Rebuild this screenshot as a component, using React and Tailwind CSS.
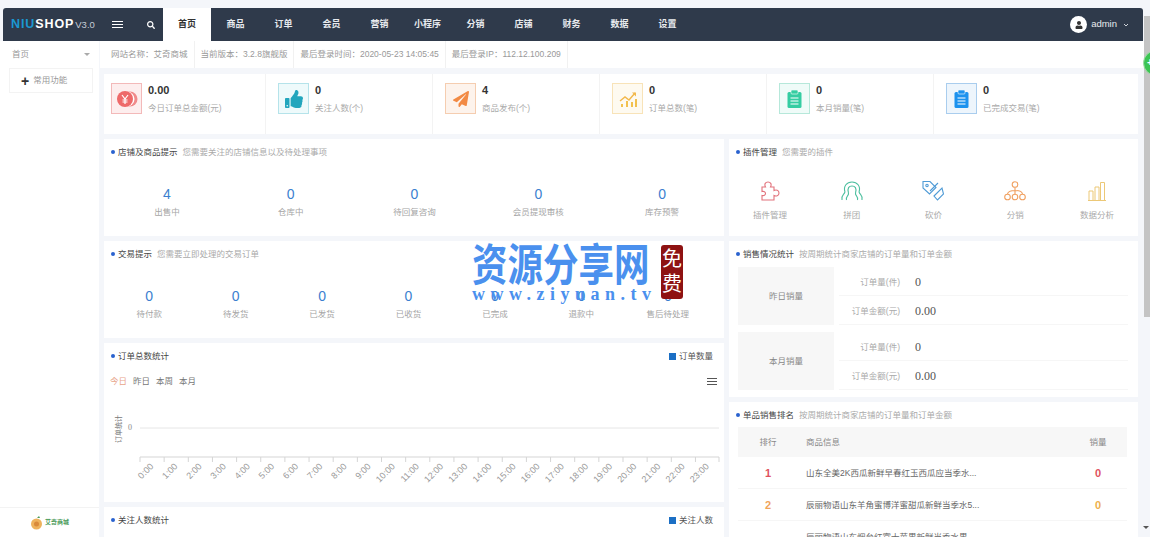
import { FaThumbsUp, FaPaperPlane, FaSearch, FaUser } from 'react-icons/fa';

const navItems = ['商品', '订单', '会员', '营销', '小程序', '分销', '店铺', '财务', '数据', '设置'];
const infoItems = ['网站名称：艾奇商城', '当前版本：3.2.8旗舰版', '最后登录时间：2020-05-23 14:05:45', '最后登录IP：112.12.100.209'];
const storeStats = [['4', '出售中'], ['0', '仓库中'], ['0', '待回复咨询'], ['0', '会员提现审核'], ['0', '库存预警']];
const tradeStats = [['0', '待付款'], ['0', '待发货'], ['0', '已发货'], ['0', '已收货'], ['0', '已完成'], ['0', '退款中'], ['0', '售后待处理']];

function CoinIcon() {
  return (
    <svg width="22" height="18" viewBox="0 0 22 18">
      <circle cx="14" cy="9" r="7.5" fill="#f08a8a" />
      <circle cx="11" cy="9" r="7.5" fill="#fff" />
      <circle cx="9" cy="9" r="8" fill="#ee6a6a" />
      <path d="M6 5l3 4 3-4M9 9v5M6.5 10h5M6.5 12h5" stroke="#fff" strokeWidth="1.2" fill="none" />
    </svg>
  );
}

function GrowthIcon() {
  return (
    <svg width="20" height="18" viewBox="0 0 20 18" fill="none">
      <path d="M2 11l5-4 4 3 6-7" stroke="#f2b84b" strokeWidth="1.4" />
      <path d="M14 2.5h4v4z" fill="#f2b84b" />
      <path d="M3 17v-3h2v3zM8 17v-6h2v6zM13 17v-5h2v5zM17 17v-8h2v8z" fill="#f2c14e" />
    </svg>
  );
}

function ClipboardIcon({ color }) {
  return (
    <svg width="15" height="18" viewBox="0 0 15 18">
      <rect x="0.5" y="2" width="14" height="16" rx="1.5" fill={color} />
      <rect x="4" y="0" width="7" height="4" rx="1" fill={color} stroke="#fff" strokeWidth="0.6" />
      <path d="M3.5 8h8M3.5 11h8M3.5 14h8" stroke="#fff" strokeWidth="1.1" />
    </svg>
  );
}

const statCards = [
  { value: '0.00', label: '今日订单总金额(元)', box: 'border-[#f3b9b9] bg-[#fdeeee]', icon: <CoinIcon /> },
  { value: '0', label: '关注人数(个)', box: 'border-[#b5e3ea] bg-[#eefafb]', icon: <FaThumbsUp className="text-[18px] text-[#23a6bd]" /> },
  { value: '4', label: '商品发布(个)', box: 'border-[#f5cdb0] bg-[#fdf3ec]', icon: <FaPaperPlane className="text-[16px] text-[#f28a44]" /> },
  { value: '0', label: '订单总数(笔)', box: 'border-[#f8e3b8] bg-[#fefaf0]', icon: <GrowthIcon /> },
  { value: '0', label: '本月销量(笔)', box: 'border-[#b6e8da] bg-[#effbf8]', icon: <ClipboardIcon color="#35cda2" /> },
  { value: '0', label: '已完成交易(笔)', box: 'border-[#a9cdee] bg-[#edf5fc]', icon: <ClipboardIcon color="#1c92ee" /> },
];

const plugins = [
  {
    label: '插件管理',
    icon: (
      <svg width="20" height="20" viewBox="0 0 20 20" fill="none" stroke="#e2737c" strokeWidth="1.1">
        <path d="M2 6h3.500C4 3 5.500 1 8 1s4 2 2.500 5H14v3.500c2-1 5-.5 5 2.500s-3 3.500-5 2.500V19H2v-4.500c2 .5 3.500-.5 3.500-2S4 10 2 10.500z" />
      </svg>
    ),
  },
  {
    label: '拼团',
    icon: (
      <svg width="24" height="20" viewBox="0 0 24 20" fill="none" stroke="#4dbf9f" strokeWidth="1.1">
        <path d="M5 11C3 5 7 1 12 1s9 4 7 10M8.500 12C7 7 9 5 12 5s5 2 3.500 7" />
        <path d="M5 11c-1 3-4 3-3 8M8.500 12c.500 3-3 3-2 7M15.500 12c-.500 3 3 3 2 7M19 11c1 3 4 3 3 8" />
      </svg>
    ),
  },
  {
    label: '砍价',
    icon: (
      <svg width="22" height="22" viewBox="0 0 22 22" fill="none" stroke="#4f9bd6" strokeWidth="1.1">
        <path d="M1 1.500h7l6 6-6.500 6.500-6.500-6z" />
        <circle cx="5" cy="5.500" r="1.200" />
        <path d="M12 16l8-8 1.500 6-6 6zM16 3l-8 8" />
      </svg>
    ),
  },
  {
    label: '分销',
    icon: (
      <svg width="22" height="20" viewBox="0 0 22 20" fill="none" stroke="#f0a060" strokeWidth="1.1">
        <circle cx="11" cy="3.500" r="2.800" />
        <circle cx="3.500" cy="16" r="2.800" />
        <circle cx="11" cy="16" r="2.800" />
        <circle cx="18.500" cy="16" r="2.800" />
        <path d="M11 6.500v6.500M11 9.500c-5 0-7 1-7.500 3.500M11 9.500c5 0 7 1 7.500 3.500" />
      </svg>
    ),
  },
  {
    label: '数据分析',
    icon: (
      <svg width="18" height="19" viewBox="0 0 18 19" fill="none" stroke="#ecc877" strokeWidth="1">
        <path d="M0 18.500h18M1 18V9h4v9M7 18V5h4v13M12.500 18V.500h4V18" />
      </svg>
    ),
  },
];

const ranking = [
  ['1', '山东全美2K西瓜新鲜早春红玉西瓜应当季水...', '0', 'text-[#e0525e]', 'text-[#e0525e]'],
  ['2', '辰丽物语山东羊角蜜博洋蜜甜瓜新鲜当季水5...', '0', 'text-[#f0a45a]', 'text-[#eeb04d]'],
  ['', '辰丽物语山东烟台红富士苹果新鲜当季水果...', '', '', ''],
];

function CardTitle({ title, sub }) {
  return (
    <div className="flex h-[26px] items-center pl-[7px]">
      <span className="h-[4px] w-[4px] rounded-full bg-[#2a62cf]" />
      <span className="ml-[3px] text-[8.5px] text-[#444]">{title}</span>
      {sub && <span className="ml-[5px] text-[8.5px] text-[#aaa]">{sub}</span>}
    </div>
  );
}

function StatCell({ value, label }) {
  return (
    <div className="flex flex-col items-center">
      <div className="text-[14px] leading-[20px] text-[#3c7fd0]">{value}</div>
      <div className="mt-[2px] text-[8.5px] leading-[12px] text-[#a5a5a5]">{label}</div>
    </div>
  );
}

function Legend({ label }) {
  return (
    <div className="ml-auto mr-[11px] flex items-center">
      <span className="h-[7px] w-[7px] bg-[#1c6fc4]" />
      <span className="ml-[3px] text-[8.5px] text-[#555]">{label}</span>
    </div>
  );
}

function OrderChart() {
  const hours = Array.from({ length: 24 }, (_, i) => i);
  return (
    <svg width="620" height="100" viewBox="0 0 620 100" className="block">
      <text transform="translate(17 43) rotate(-90)" fontSize="7" fill="#777">订单统计</text>
      <text x="24" y="30" fontSize="8" fill="#888" fontFamily="Liberation Serif">0</text>
      <line x1="36" x2="615" y1="28" y2="28" stroke="#e6e6e6" />
      <line x1="36" x2="615" y1="57" y2="57" stroke="#d5d5d5" />
      {hours.map((h) => {
        const x = 36 + h * 24.15;
        return (
          <g key={h}>
            <line x1={x} x2={x} y1="57" y2="62" stroke="#d5d5d5" />
            <text x={x + 14} y="67" fontSize="9" fill="#999" textAnchor="end" transform={`rotate(-45 ${x + 14} 67)`}>
              {h}:00
            </text>
          </g>
        );
      })}
      <line x1="615" x2="615" y1="57" y2="62" stroke="#d5d5d5" />
    </svg>
  );
}

function SalesBlock({ title, rows }) {
  return (
    <div className="flex">
      <div className="flex w-[96px] items-center justify-center bg-[#f7f7f7] text-[8.5px] text-[#888]">{title}</div>
      <div className="flex-1 pl-[5px]">
        {rows.map(([label, value]) => (
          <div key={label} className="flex h-[29px] items-center border-b border-[#f6f6f6] pt-[2px]">
            <span className="w-[61px] text-right text-[8.5px] text-[#aaa]">{label}</span>
            <span className="ml-[15px] font-['Liberation_Serif',serif] text-[12px] text-[#555]">{value}</span>
          </div>
        ))}
      </div>
    </div>
  );
}

export default function App() {
  return (
    <div className="relative flex h-[537px] w-[1150px] flex-col overflow-hidden bg-[#f4f6fa] pt-[8px] font-['Liberation_Sans','Noto_Sans_CJK_SC',sans-serif]">
      {/* top nav */}
      <div className="ml-[3px] mr-[7px] flex h-[33px] shrink-0 items-center rounded-t-[3px] bg-[#2f3a4b]">
        <div className="flex w-[98px] items-baseline pl-[8px]">
          <span className="text-[12.5px] font-bold tracking-[0.9px] text-[#1b97d2]">NIU</span>
          <span className="text-[12.5px] font-bold tracking-[0.9px] text-white">SHOP</span>
          <span className="ml-[1px] text-[9.5px] text-[#c6ccd6]">V3.0</span>
        </div>
        <div className="ml-[11px] flex w-[11px] flex-col gap-[2px]">
          <span className="h-[1px] bg-white" />
          <span className="h-[1px] bg-white" />
          <span className="h-[1px] bg-white" />
        </div>
        <FaSearch className="ml-[24px] text-[8px] text-white" />
        <div className="ml-[8px] flex h-full w-[48px] items-center justify-center bg-white text-[9px] font-bold text-[#333]">首页</div>
        {navItems.map((item) => (
          <div key={item} className="flex w-[48px] justify-center pl-[1px] text-[9px] font-bold text-[#e8eaee]">{item}</div>
        ))}
        <div className="ml-auto mr-[14px] flex items-center">
          <span className="flex h-[17px] w-[17px] items-center justify-center rounded-full bg-white">
            <FaUser className="text-[8px] text-[#333]" />
          </span>
          <span className="ml-[4px] text-[9.5px] text-[#e8eaee]">admin</span>
          <svg width="6" height="4" viewBox="0 0 6 4" className="ml-[6px]" fill="none" stroke="#cfd3da">
            <path d="M1 1l2 2 2-2" />
          </svg>
        </div>
      </div>

      <div className="flex min-h-0 flex-1">
        {/* sidebar */}
        <aside className="flex w-[99px] shrink-0 flex-col bg-white">
          <div className="flex h-[27px] items-center justify-between pl-[12px] pr-[9px] text-[8.5px] text-[#999]">
            首页
            <span className="h-0 w-0 border-x-[3px] border-t-[3px] border-x-transparent border-t-[#aaa]" />
          </div>
          <div className="ml-[9px] flex h-[25px] w-[84px] items-center border border-[#f3f3f3] pl-[11px] text-[8.5px] text-[#999]">
            <span className="mr-[4px] text-[14px] font-bold leading-none text-[#333]">+</span>
            常用功能
          </div>
          <div className="mt-auto flex h-[30px] items-center justify-center border-t border-[#f3f3f3]">
            <svg width="13" height="14" viewBox="0 0 13 14">
              <circle cx="6.5" cy="8" r="5.5" fill="#eeb25c" />
              <circle cx="6.5" cy="8" r="2.5" fill="#d98a3a" />
              <path d="M7 2l2-2 1 2z" fill="#4a9a58" />
            </svg>
            <span className="ml-[2px] text-[6px] font-bold text-[#4a9a58]">艾奇商城</span>
          </div>
        </aside>

        <main className="ml-[1px] min-w-0 flex-1">
          {/* info bar */}
          <div className="flex h-[27px] items-center bg-white pr-[7px] text-[8.5px] text-[#999]">
            {infoItems.map((item) => (
              <div key={item} className="flex h-full items-center border-r border-[#f1f1f1] px-[6px] first:pl-[11px]">{item}</div>
            ))}
          </div>

          <div className="ml-[4px] mr-[12px] mt-[6px] flex h-[60px] bg-white">
            {statCards.map((card, i) => (
              <div key={card.label} className={i === 0 ? 'flex w-[161px] items-start pl-[7px] pt-[9px]' : 'flex w-[167px] items-start border-l border-[#f3f3f3] pl-[12px] pt-[9px]'}>
                <div className={`flex h-[31px] w-[31px] shrink-0 items-center justify-center border ${card.box}`}>{card.icon}</div>
                <div className="ml-[6px]">
                  <div className="text-[11px] font-bold leading-[14px] text-[#333]">{card.value}</div>
                  <div className="mt-[5px] text-[8.5px] leading-[12px] text-[#aaa]">{card.label}</div>
                </div>
              </div>
            ))}
          </div>

          <div className="ml-[4px] mr-[12px] mt-[5px] flex gap-[5px]">
            {/* left column */}
            <div className="flex w-[620px] flex-col gap-[5px]">
              <section className="h-[97px] bg-white">
                <CardTitle title="店铺及商品提示" sub="您需要关注的店铺信息以及待处理事项" />
                <div className="mt-[19px] grid grid-cols-5 pl-[1px]">
                  {storeStats.map(([value, label]) => <StatCell key={label} value={value} label={label} />)}
                </div>
              </section>
              <section className="h-[97px] bg-white">
                <CardTitle title="交易提示" sub="您需要立即处理的交易订单" />
                <div className="ml-[2px] mt-[19px] grid w-[605px] grid-cols-7">
                  {tradeStats.map(([value, label]) => <StatCell key={label} value={value} label={label} />)}
                </div>
              </section>
              <section className="h-[159px] bg-white">
                <div className="flex items-center">
                  <CardTitle title="订单总数统计" />
                  <Legend label="订单数量" />
                </div>
                <div className="mt-[5px] flex h-[14px] items-center gap-[6px] pl-[6px] text-[8.5px] text-[#777]">
                  <span className="text-[#e8a58c]">今日</span>
                  <span>昨日</span>
                  <span>本周</span>
                  <span>本月</span>
                  <div className="ml-auto mr-[7px] flex w-[10px] flex-col gap-[2px]">
                    <span className="h-[1px] bg-[#555]" />
                    <span className="h-[1px] bg-[#555]" />
                    <span className="h-[1px] bg-[#555]" />
                  </div>
                </div>
                <div className="mt-[12px]">
                  <OrderChart />
                </div>
              </section>
              <section className="h-[30px] bg-white">
                <div className="flex items-center">
                  <CardTitle title="关注人数统计" />
                  <Legend label="关注人数" />
                </div>
              </section>
            </div>

            {/* right column */}
            <div className="flex min-w-0 flex-1 flex-col gap-[5px]">
              <section className="h-[97px] bg-white">
                <CardTitle title="插件管理" sub="您需要的插件" />
                <div className="mt-[14px] grid grid-cols-5">
                  {plugins.map((p) => (
                    <div key={p.label} className="flex flex-col items-center">
                      <div className="flex h-[24px] items-center">{p.icon}</div>
                      <div className="mt-[6px] text-[8.5px] leading-[12px] text-[#aaa]">{p.label}</div>
                    </div>
                  ))}
                </div>
              </section>
              <section className="h-[156px] bg-white px-[9px]">
                <div className="-ml-[9px]">
                  <CardTitle title="销售情况统计" sub="按周期统计商家店铺的订单量和订单金额" />
                </div>
                <div className="flex flex-col gap-[7px] pr-[1px]">
                  <SalesBlock title="昨日销量" rows={[['订单量(件)', '0'], ['订单金额(元)', '0.00']]} />
                  <SalesBlock title="本月销量" rows={[['订单量(件)', '0'], ['订单金额(元)', '0.00']]} />
                </div>
              </section>
              <section className="h-[140px] overflow-hidden bg-white px-[9px]">
                <div className="-ml-[9px]">
                  <CardTitle title="单品销售排名" sub="按周期统计商家店铺的订单量和订单金额" />
                </div>
                <div className="-mt-[1px] mr-[2px] flex h-[30px] items-center bg-[#f7f7f7] text-[8.5px] text-[#888]">
                  <span className="w-[60px] text-center">排行</span>
                  <span className="flex-1 pl-[8px]">商品信息</span>
                  <span className="w-[58px] text-center">销量</span>
                </div>
                {ranking.map(([rank, name, sold, rankColor, soldColor]) => (
                  <div key={name} className="mr-[2px] flex h-[32px] items-center border-b border-[#f6f6f6] pt-[1px]">
                    <span className={`w-[60px] text-center text-[11px] font-bold ${rankColor}`}>{rank}</span>
                    <span className="flex-1 pl-[8px] text-[8.5px] text-[#666]">{name}</span>
                    <span className={`w-[58px] text-center text-[11px] font-bold ${soldColor}`}>{sold}</span>
                  </div>
                ))}
              </section>
            </div>
          </div>
        </main>
      </div>

      {/* page scrollbar */}
      <div className="absolute right-0 top-[16px] h-[301px] w-[6px] bg-[#c4c4c4]" />
      <div className="absolute bottom-[8px] right-[1px] h-0 w-0 border-x-[3px] border-t-[3px] border-x-transparent border-t-[#555]" />

      {/* floating green button */}
      <div className="absolute left-[1143px] top-[50px] flex h-[26px] w-[26px] items-center rounded-full border border-[#9edba5] bg-[#3cc453] pl-[3px] text-[10px] font-bold leading-none text-white">+</div>

      {/* watermark */}
      <div className="pointer-events-none absolute left-[472px] top-[233px] w-[215px]">
        <div className="origin-top scale-y-125 text-[35.5px] font-bold leading-[52px] text-[#4a90ee]">资源分享网</div>
        <div className="font-['Liberation_Serif',serif] text-[18px] font-bold leading-[18px] tracking-[5.5px] text-[#4a90ee]">www.ziyuan.tv</div>
        <div className="absolute left-[189px] top-[12px] flex h-[54px] w-[22px] flex-col items-center justify-center rounded-[3px] bg-[#8e1212] text-[20px] font-normal leading-[25px] text-white">
          <span>免</span>
          <span>费</span>
        </div>
      </div>
    </div>
  );
}
